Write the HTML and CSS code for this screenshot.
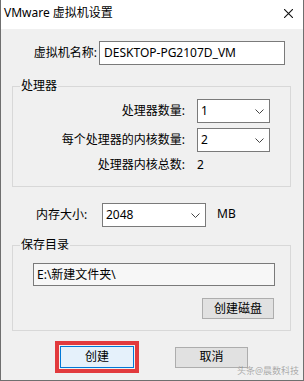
FILE: index.html
```html
<!DOCTYPE html>
<html lang="zh-CN">
<head>
    <meta charset="UTF-8">
    <title>VMware 虚拟机设置</title>
    <link rel="stylesheet" href="styles.css">
</head>
<body>
    <div class="window">
        <div class="titlebar">
            <span class="title">VMware 虚拟机设置</span>
            <svg class="close" width="9" height="9" viewBox="0 0 9 9">
                <path d="M0 0L9 9M9 0L0 9" stroke="#111" stroke-width="1.1" fill="none"/>
            </svg>
        </div>

        <div class="content">
            <div class="name-row">
                <span class="name-label">虚拟机名称:</span>
                <div class="field name-field">DESKTOP-PG2107D_VM</div>
            </div>

            <fieldset class="group cpu-group">
                <legend>处理器</legend>
                <div class="cpu-row">
                    <span class="cpu-label">处理器数量:</span>
                    <div class="select cpu-select">
                        <span>1</span>
                        <svg class="chevron" width="9" height="5" viewBox="0 0 9 5"><polyline points="0.5,0.5 4.5,4.5 8.5,0.5" fill="none" stroke="#444" stroke-width="1"/></svg>
                    </div>
                </div>
                <div class="cpu-row">
                    <span class="cpu-label">每个处理器的内核数量:</span>
                    <div class="select cpu-select">
                        <span>2</span>
                        <svg class="chevron" width="9" height="5" viewBox="0 0 9 5"><polyline points="0.5,0.5 4.5,4.5 8.5,0.5" fill="none" stroke="#444" stroke-width="1"/></svg>
                    </div>
                </div>
                <div class="cpu-row total-row">
                    <span class="cpu-label">处理器内核总数:</span>
                    <span class="total-value">2</span>
                </div>
            </fieldset>

            <div class="memory-row">
                <span class="memory-label">内存大小:</span>
                <div class="select memory-select">
                    <span>2048</span>
                    <svg class="chevron" width="9" height="5" viewBox="0 0 9 5"><polyline points="0.5,0.5 4.5,4.5 8.5,0.5" fill="none" stroke="#444" stroke-width="1"/></svg>
                </div>
                <span class="unit">MB</span>
            </div>

            <fieldset class="group dir-group">
                <legend>保存目录</legend>
                <div class="field path-field">E:\新建文件夹\</div>
                <div class="disk-row">
                    <button class="btn disk-btn">创建磁盘</button>
                </div>
            </fieldset>

            <div class="actions">
                <div class="highlight">
                    <button class="btn primary">创建</button>
                </div>
                <button class="btn cancel">取消</button>
            </div>
        </div>

        <div class="watermark">头条@晨数科技</div>
    </div>
</body>
</html>
```

FILE: styles.css
```css
* {
    box-sizing: border-box;
    margin: 0;
    padding: 0;
}

html, body {
    width: 304px;
    height: 381px;
    background: #f0f0f0;
}

body {
    font-family: "Noto Sans", "Noto Sans CJK SC", sans-serif;
    font-size: 12px;
    color: #000;
}

.window {
    position: relative;
    width: 304px;
    height: 381px;
    border: 1px solid #6f6f6f;
    border-top: none;
    background: #f0f0f0;
    overflow: hidden;
}

.titlebar {
    height: 29px;
    background: #fff;
    display: flex;
    align-items: center;
    justify-content: space-between;
    padding: 0 10px 3px 3px;
}

.title {
    font-size: 12px;
    line-height: 16px;
}

.content {
    padding-top: 12px;
    display: flex;
    flex-direction: column;
}

.field {
    height: 24px;
    border: 1px solid #7a7a7a;
    background: #fff;
    line-height: 22px;
    padding-left: 4px;
    white-space: nowrap;
}

.name-row {
    display: flex;
    height: 24px;
    align-items: center;
}

.name-label {
    width: 96px;
    text-align: right;
    margin-right: 2px;
    line-height: 16px;
}

.name-field {
    width: 186px;
}

/* group boxes */
.group {
    border: 1px solid #d8d8d8;
    margin: 0 12px 0 11px;
    padding: 0;
    min-width: 0;
}

.group legend {
    margin-left: 7px;
    padding: 0 1px;
    line-height: 16px;
}

.cpu-group {
    margin-top: 13px;
    padding-bottom: 11px;
}

.cpu-row {
    display: flex;
    justify-content: flex-end;
    align-items: center;
    height: 24px;
    margin-top: 5px;
    padding-right: 20px;
}

.cpu-label {
    margin-right: 12px;
    line-height: 16px;
}

.total-row {
    height: 20px;
    margin-top: 3px;
}

.total-value {
    width: 73px;
    line-height: 16px;
}

.select {
    height: 24px;
    border: 1px solid #7a7a7a;
    background: #fff;
    display: flex;
    align-items: center;
    justify-content: space-between;
    padding: 0 5px 0 3px;
    line-height: 16px;
}

.cpu-select {
    width: 73px;
}

.chevron {
    display: block;
}

.memory-row {
    display: flex;
    align-items: center;
    height: 24px;
    margin-top: 16px;
    padding-left: 35px;
}

.memory-label {
    width: 66px;
    line-height: 16px;
}

.memory-select {
    width: 104px;
}

.unit {
    margin-left: 11px;
    line-height: 16px;
    margin-top: -3px;
}

.dir-group {
    margin-top: 10px;
    padding-bottom: 11px;
}

.path-field {
    width: 242px;
    height: 23px;
    margin: 10px 0 0 20px;
    line-height: 21px;
    padding-left: 3px;
    background: #f7f7f7;
}

.disk-row {
    display: flex;
    justify-content: flex-end;
    margin-top: 12px;
    padding-right: 16px;
}

.btn {
    font-family: inherit;
    font-size: 12px;
    color: #000;
    border: 1px solid #adadad;
    background: #e1e1e1;
    line-height: 16px;
}

.disk-btn {
    width: 72px;
    height: 21px;
}

.actions {
    display: flex;
    align-items: center;
    margin-top: 10px;
    padding-left: 54px;
}

.highlight {
    border: 4px solid #e23a3d;
    padding: 1px;
    width: 84px;
    height: 32px;
}

.primary {
    display: block;
    width: 74px;
    height: 22px;
    background: #e5f1fb;
    border-color: #0078d7;
}

.cancel {
    width: 73px;
    height: 21px;
    margin-left: 36px;
}

.watermark {
    position: absolute;
    left: 236px;
    top: 365px;
    font-size: 9px;
    line-height: 12px;
    color: rgba(110, 110, 110, 0.55);
    white-space: nowrap;
}
```
